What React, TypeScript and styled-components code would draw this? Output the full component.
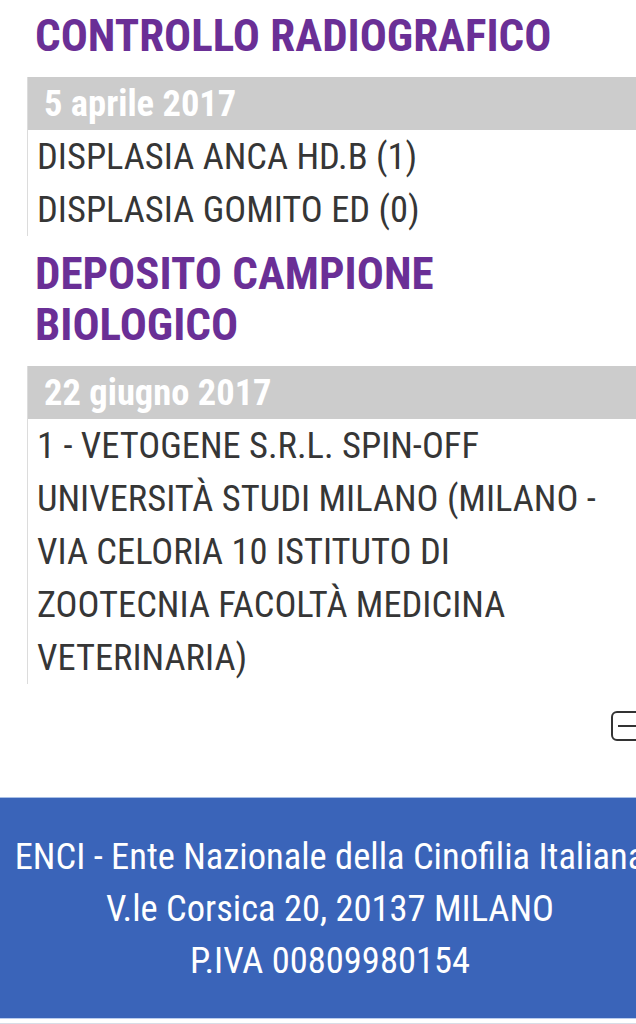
import React from "react";
import styled, { createGlobalStyle } from "styled-components";

const Global = createGlobalStyle`
  html, body {
    margin: 0;
    padding: 0;
    background: #ffffff;
    overflow: hidden;
  }
  body {
    font-family: "Roboto Condensed", "Liberation Sans Narrow", "DejaVu Sans Condensed", Roboto, sans-serif;
  }
`;

const Page = styled.div`
  width: 636px;
  display: flex;
  flex-direction: column;
`;

const Main = styled.main`
  display: flex;
  flex-direction: column;
  padding: 10px 0 0 27px;
`;

const SectionTitle = styled.h2`
  margin: 0 0 16px 0;
  padding: 0 40px 0 8px;
  font-size: 45px;
  line-height: 51px;
  font-weight: 700;
  color: #6a2f96;
  text-transform: uppercase;
`;

const Card = styled.section<{ $gap?: number }>`
  display: flex;
  flex-direction: column;
  border-left: 1px solid #dcdcdc;
  margin-bottom: ${(p) => p.$gap ?? 12}px;
`;

const DateBar = styled.div`
  background: #cccccc;
  color: #ffffff;
  font-size: 36.5px;
  font-weight: 700;
  line-height: 53px;
  padding-left: 16px;
`;

const Body = styled.div`
  padding: 0 14px 0 9px;
  color: #363636;
  font-size: 36.5px;
  line-height: 53px;
  font-weight: 400;
`;

const Line = styled.div``;

const ToolRow = styled.div`
  display: flex;
  justify-content: flex-end;
  padding: 27px 0 55px 0;
  margin-right: -15px;
`;

const Footer = styled.footer`
  width: 660px;
  background: #3a64b9;
  border-top: 1px solid #a9c0e6;
  border-bottom: 1px solid #b9cdef;
  color: #ffffff;
  text-align: center;
  font-size: 36.5px;
  line-height: 52px;
  padding: 33px 0 31px 0;
  white-space: nowrap;
`;

const Tail = styled.div`
  height: 4px;
  border-bottom: 1px solid #d8dde6;
`;

const CollapseIcon = () => (
  <svg width="40" height="31" viewBox="0 0 40 31" fill="none">
    <rect x="1" y="1" width="36" height="28" rx="5" stroke="#333" strokeWidth="2" />
    <line x1="7" y1="15" x2="30" y2="15" stroke="#333" strokeWidth="2" />
  </svg>
);

export default function App() {
  return (
    <>
      <Global />
      <Page>
        <Main>
          <SectionTitle>Controllo radiografico</SectionTitle>
          <Card>
            <DateBar>5 aprile 2017</DateBar>
            <Body>
              <Line>DISPLASIA ANCA HD.B (1)</Line>
              <Line>DISPLASIA GOMITO ED (0)</Line>
            </Body>
          </Card>
          <SectionTitle>Deposito campione biologico</SectionTitle>
          <Card $gap={0}>
            <DateBar>22 giugno 2017</DateBar>
            <Body>
              1 - VETOGENE S.R.L. SPIN-OFF UNIVERSITÀ STUDI MILANO (MILANO - VIA CELORIA 10 ISTITUTO DI ZOOTECNIA FACOLTÀ MEDICINA VETERINARIA)
            </Body>
          </Card>
          <ToolRow>
            <CollapseIcon />
          </ToolRow>
        </Main>
        <Footer>
          <div>ENCI - Ente Nazionale della Cinofilia Italiana</div>
          <div>V.le Corsica 20, 20137 MILANO</div>
          <div>P.IVA 00809980154</div>
        </Footer>
        <Tail />
      </Page>
    </>
  );
}
